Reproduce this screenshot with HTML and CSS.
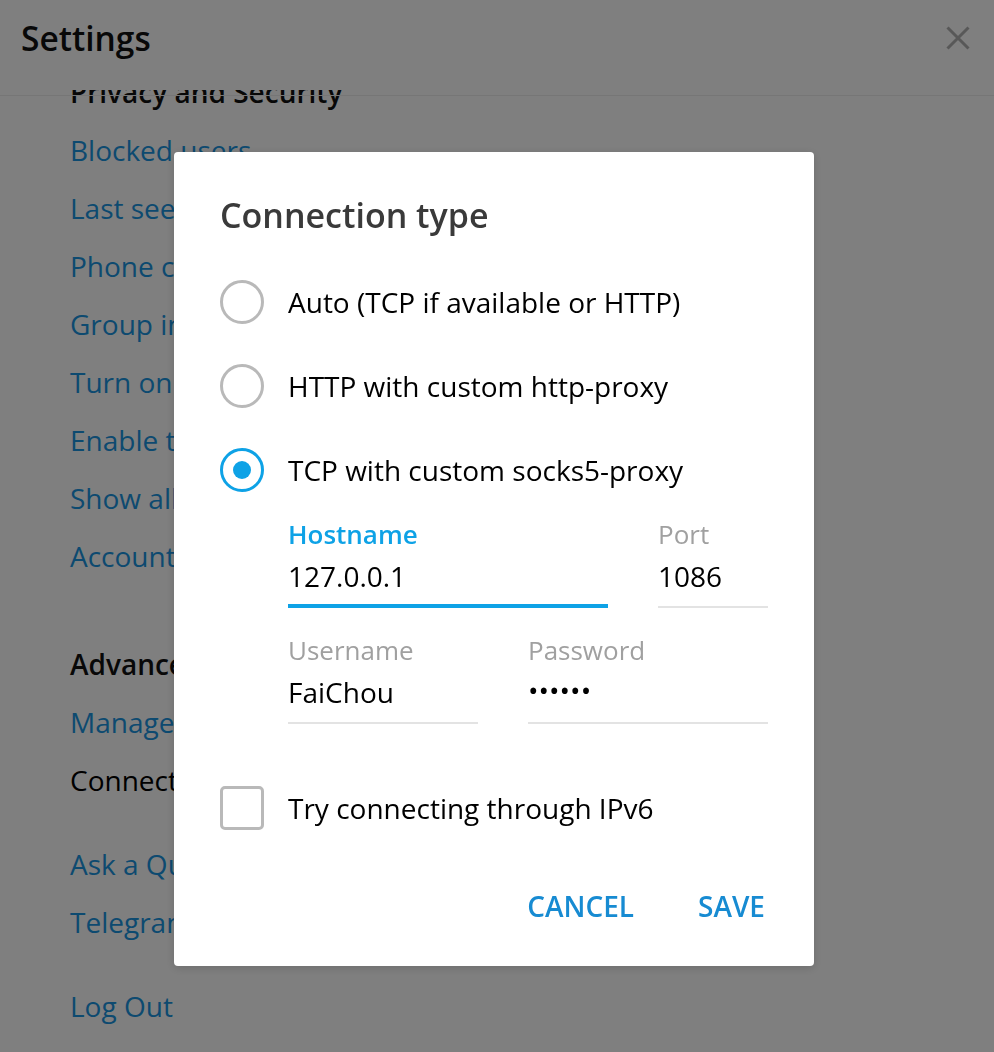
FILE: index.html
```html
<!DOCTYPE html>
<html lang="en">
<head>
<meta charset="utf-8">
<title>Settings</title>
<link rel="stylesheet" href="styles.css">
</head>
<body>
<div class="page">
  <header class="page-header">
    <h1 class="page-title">Settings</h1>
    <button class="close-btn" aria-label="Close">
      <svg width="24" height="24" viewBox="0 0 24 24"><path d="M1.5 1.5 L22.5 22.5 M22.5 1.5 L1.5 22.5" stroke="currentColor" stroke-width="3" fill="none"/></svg>
    </button>
  </header>
  <div class="scroller">
    <div class="scroll-inner">
      <section class="section">
        <h2 class="section-title">Privacy and Security</h2>
        <a class="item link">Blocked users</a>
        <a class="item link">Last seen and online</a>
        <a class="item link">Phone calls</a>
        <a class="item link">Group invite settings</a>
        <a class="item link">Turn on local passcode</a>
        <a class="item link">Enable two-step verification</a>
        <a class="item link">Show all sessions</a>
        <a class="item link">Account self-destruct</a>
      </section>
      <section class="section tight">
        <h2 class="section-title">Advanced</h2>
        <a class="item link">Manage local storage</a>
        <span class="item plain">Connection type: TCP with proxy</span>
      </section>
      <section class="section tight">
        <a class="item link">Ask a Question</a>
        <a class="item link">Telegram FAQ</a>
      </section>
      <section class="section tight">
        <a class="item link">Log Out</a>
      </section>
    </div>
  </div>
</div>

<div class="overlay">
  <div class="dialog">
    <h3 class="dialog-title">Connection type</h3>
    <div class="radio-list">
      <label class="option"><span class="radio"></span><span class="option-text">Auto (TCP if available or HTTP)</span></label>
      <label class="option"><span class="radio"></span><span class="option-text">HTTP with custom http-proxy</span></label>
      <label class="option"><span class="radio checked"></span><span class="option-text">TCP with custom socks5-proxy</span></label>
    </div>
    <div class="fields">
      <div class="field-row">
        <div class="field host focused">
          <div class="field-label">Hostname</div>
          <div class="field-value">127.0.0.1</div>
        </div>
        <div class="field port">
          <div class="field-label">Port</div>
          <div class="field-value">1086</div>
        </div>
      </div>
      <div class="field-row">
        <div class="field user">
          <div class="field-label">Username</div>
          <div class="field-value">FaiChou</div>
        </div>
        <div class="field pass">
          <div class="field-label">Password</div>
          <div class="field-value dots">••••••</div>
        </div>
      </div>
    </div>
    <label class="option check-option"><span class="checkbox"></span><span class="option-text">Try connecting through IPv6</span></label>
    <div class="actions">
      <button class="action">CANCEL</button>
      <button class="action">SAVE</button>
    </div>
  </div>
</div>
</body>
</html>
```

FILE: styles.css
```css
* { box-sizing: border-box; }
html, body { margin: 0; padding: 0; }
body {
  font-family: "Open Sans", "Liberation Sans", sans-serif;
  background: #fff;
  color: #000;
  width: 994px;
  height: 1052px;
  overflow: hidden;
}

.page { height: 1052px; display: flex; flex-direction: column; }

.page-header {
  position: relative;
  z-index: 2;
  height: 96px;
  flex: none;
  display: flex;
  align-items: flex-start;
  justify-content: space-between;
  padding: 16px 24px 0 21px;
  background: linear-gradient(#fff, #fff) top left / 100% 90px no-repeat;
  border-bottom: 1px solid #ececec;
}
.page-title {
  margin: 0;
  font-size: 33.5px;
  font-weight: 600;
  line-height: 44px;
  color: #111;
}
.close-btn {
  margin-top: 10px;
  border: 0;
  background: none;
  padding: 0;
  color: #b0b0b0;
  display: flex;
}

.scroller { flex: 1; margin-top: -11px; overflow: hidden; }
.scroll-inner { padding-left: 70px; margin-top: -22px; }

.section { display: flex; flex-direction: column; margin-bottom: 50px; }
.section.tight { margin-bottom: 26px; }
.section-title {
  margin: 0;
  font-size: 28px;
  font-weight: 600;
  line-height: 58px;
  color: #111;
}
.item {
  font-size: 28px;
  line-height: 58px;
  white-space: nowrap;
}
.link { color: #1a94e0; }
.plain { color: #000; }

.overlay {
  position: fixed;
  inset: 0;
  z-index: 10;
  background: rgba(0, 0, 0, 0.5);
  display: flex;
  justify-content: flex-start;
  align-items: flex-start;
  padding: 152px 0 0 174px;
}

.dialog {
  width: 640px;
  height: 814px;
  background: #fff;
  border-radius: 4px;
  box-shadow: 0 2px 10px rgba(0, 0, 0, 0.15);
  padding: 43px 46px 40px 46px;
  display: flex;
  flex-direction: column;
}
.dialog-title {
  margin: 0;
  font-size: 34px;
  font-weight: 600;
  line-height: 40px;
  color: #3a3a3a;
}
.radio-list { margin-top: 25px; display: flex; flex-direction: column; }
.option {
  height: 84px;
  display: flex;
  align-items: center;
  gap: 24px;
}
.option-text { font-size: 28px; color: #000; white-space: nowrap; }
.radio {
  width: 44px;
  height: 44px;
  border-radius: 50%;
  border: 3px solid #b9b9b9;
  flex: none;
  display: flex;
  align-items: center;
  justify-content: center;
}
.radio.checked { border-color: #0ea2e6; }
.radio.checked::after {
  content: "";
  width: 18px;
  height: 18px;
  border-radius: 50%;
  background: #0ea2e6;
}
.checkbox {
  width: 44px;
  height: 44px;
  border-radius: 5px;
  border: 3px solid #b9b9b9;
  flex: none;
}

.fields {
  margin-top: 7px;
  padding-left: 68px;
  display: flex;
  flex-direction: column;
  gap: 27px;
}
.field-row { display: flex; gap: 50px; }
.field { display: flex; flex-direction: column; flex: none; }
.field.host { width: 320px; }
.field.port { width: 110px; }
.field.user { width: 190px; }
.field.pass { width: 240px; }
.field-label {
  font-size: 26px;
  line-height: 30px;
  color: #a0a0a0;
  font-weight: 500;
}
.field.focused .field-label { color: #0ea2e6; font-weight: 600; }
.field-value {
  font-size: 28px;
  height: 59px;
  line-height: 54px;
  color: #000;
  border-bottom: 2px solid #e3e3e3;
  white-space: nowrap;
}
.field.focused .field-value { border-bottom: 4px solid #0ea2e6; }
.field-value.dots { font-size: 28px; line-height: 50px; }

.check-option { margin-top: 42px; }

.actions {
  margin-top: auto;
  display: flex;
  justify-content: flex-end;
  gap: 64px;
  padding-right: 3px;
}
.action {
  border: 0;
  background: none;
  padding: 0;
  font-family: inherit;
  font-size: 28px;
  font-weight: 600;
  line-height: 40px;
  color: #178bd2;
}
```
